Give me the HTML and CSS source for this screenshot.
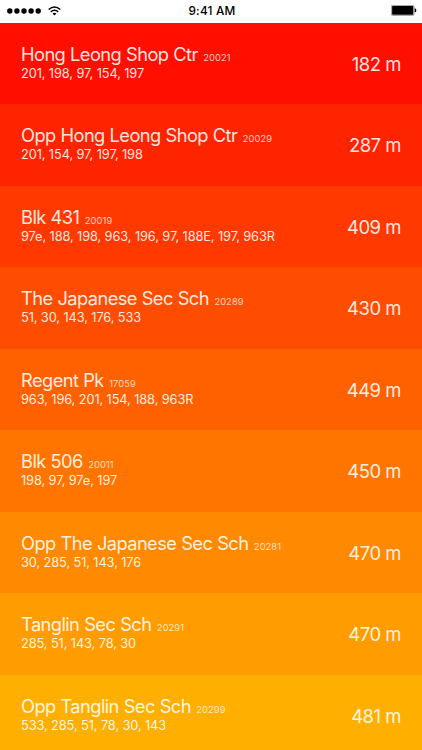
FILE: index.html
```html
<!DOCTYPE html>
<html lang="en">
    <head>
        <meta charset="UTF-8" />
        <meta name="viewport" content="width=device-width, initial-scale=1.0" />
        <title>Bus Stops</title>
        <link rel="stylesheet" href="styles.css">
    </head>
    <body>
        <!-- status bar -->
        <div class="status-bar">
            <div class="signal">
                <svg width="34" height="6" viewBox="0 0 34 6">
                    <circle cx="2.8" cy="3" r="2.7" />
                    <circle cx="9.9" cy="3" r="2.7" />
                    <circle cx="17" cy="3" r="2.7" />
                    <circle cx="24.1" cy="3" r="2.7" />
                    <circle cx="31.2" cy="3" r="2.7" />
                </svg>
                <svg width="13" height="10" viewBox="0 0 13 10">
                    <path d="M0.7 3.5 Q6.5 -1.5 12.3 3.5" fill="none" stroke="#000" stroke-width="1.6" />
                    <path d="M2.8 5.9 Q6.5 2.6 10.2 5.9" fill="none" stroke="#000" stroke-width="1.5" />
                    <path d="M4.6 7.5 Q6.5 5.9 8.4 7.5 L6.5 9.5 Z" />
                </svg>
            </div>
            <div class="time">9:41 AM</div>
            <div class="battery">
                <svg width="26" height="11" viewBox="0 0 26 11">
                    <rect x="0.4" y="0.4" width="22.6" height="10" rx="1.2" fill="#fff" stroke="#777" stroke-width="0.7" />
                    <rect x="1.1" y="1.1" width="21.2" height="8.6" rx="0.6" />
                    <path d="M23.7 3.6 h0.6 q1 0.2 1 1.8 t-1 1.8 h-0.6 z" />
                </svg>
            </div>
        </div>

        <!-- nearby stops -->
        <div class="stop-list" id="stop-list"></div>

        <script>
            const stops = [
                { name: 'Hong Leong Shop Ctr', code: '20021', buses: '201, 198, 97, 154, 197', distance: 182 },
                { name: 'Opp Hong Leong Shop Ctr', code: '20029', buses: '201, 154, 97, 197, 198', distance: 287 },
                { name: 'Blk 431', code: '20019', buses: '97e, 188, 198, 963, 196, 97, 188E, 197, 963R', distance: 409 },
                { name: 'The Japanese Sec Sch', code: '20289', buses: '51, 30, 143, 176, 533', distance: 430 },
                { name: 'Regent Pk', code: '17059', buses: '963, 196, 201, 154, 188, 963R', distance: 449 },
                { name: 'Blk 506', code: '20011', buses: '198, 97, 97e, 197', distance: 450 },
                { name: 'Opp The Japanese Sec Sch', code: '20281', buses: '30, 285, 51, 143, 176', distance: 470 },
                { name: 'Tanglin Sec Sch', code: '20291', buses: '285, 51, 143, 78, 30', distance: 470 },
                { name: 'Opp Tanglin Sec Sch', code: '20299', buses: '533, 285, 51, 78, 30, 143', distance: 481 },
            ];

            const stopList = document.getElementById('stop-list');

            stops.forEach((stop) => {
                const row = document.createElement('div');
                row.className = 'stop';
                row.innerHTML = `
                    <div class="info">
                        <div class="name">${stop.name} <span class="code">${stop.code}</span></div>
                        <div class="buses">${stop.buses}</div>
                    </div>
                    <div class="distance">${stop.distance} m</div>`;
                stopList.appendChild(row);
            });
        </script>
    </body>
</html>
```
FILE: styles.css
```css
* {
    box-sizing: border-box;
}

body {
    margin: 0;
    height: 750px;
    overflow: hidden;
    background-color: #fff;
    font-family: Inter, "Liberation Sans", sans-serif;
}

/* status bar */
.status-bar {
    display: grid;
    grid-template-columns: 1fr auto 1fr;
    align-items: center;
    height: 22.6px;
    padding: 0 5px 1px 7px;
}

.signal {
    display: flex;
    align-items: center;
    gap: 7px;
}

.time {
    font-size: 11.8px;
    font-weight: 500;
    letter-spacing: 0.2px;
}

.battery {
    display: flex;
    justify-content: flex-end;
}

/* stop list */
.stop {
    display: flex;
    justify-content: space-between;
    align-items: center;
    height: 81.5px;
    padding: 0 21px;
    color: rgba(255, 255, 255, 0.9);
}

.stop:nth-child(1) { background-color: #ff0f00; }
.stop:nth-child(2) { background-color: #ff2400; }
.stop:nth-child(3) { background-color: #ff3900; }
.stop:nth-child(4) { background-color: #ff4d00; }
.stop:nth-child(5) { background-color: #ff6100; }
.stop:nth-child(6) { background-color: #ff7500; }
.stop:nth-child(7) { background-color: #ff8900; }
.stop:nth-child(8) { background-color: #ff9c00; }
.stop:nth-child(9) { background-color: #ffaf00; }

.info {
    padding-bottom: 2px;
}

.name {
    font-size: 18.3px;
    line-height: 18px;
    letter-spacing: -0.58px;
    word-spacing: 0.3px;
}

.code {
    margin-left: 0.6px;
    font-size: 9.3px;
    letter-spacing: 0.1px;
    opacity: 0.85;
}

.buses {
    font-size: 12.8px;
    line-height: 13px;
    letter-spacing: -0.1px;
}

.distance {
    padding-top: 1px;
    font-size: 18.5px;
    line-height: 22px;
    letter-spacing: -0.5px;
}
```
